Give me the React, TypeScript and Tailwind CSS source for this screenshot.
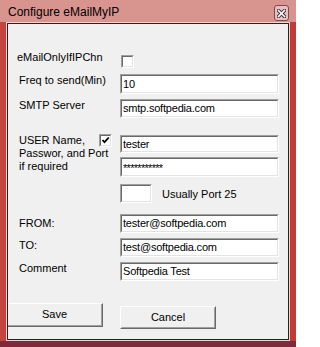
import React from "react";

const font = { fontFamily: '"Liberation Sans", Arial, sans-serif' };

function Field({ w = 159, h, children }: { w?: number; h: number; children?: React.ReactNode }) {
  return (
    <div
      className="shrink-0 border border-t-[#a0a0a0] border-l-[#a0a0a0] border-b-white border-r-white"
      style={{ width: w, height: h }}
    >
      <div className="w-full h-full border border-t-[#696969] border-l-[#696969] border-b-[#e3e3e3] border-r-[#e3e3e3] bg-white flex items-center pl-[1px] text-[11px] leading-[13px] tracking-[-0.2px] text-black whitespace-nowrap overflow-hidden">
        {children}
      </div>
    </div>
  );
}

function Check({ checked }: { checked?: boolean }) {
  return (
    <div className="w-[13px] h-[13px] shrink-0 border border-t-[#a0a0a0] border-l-[#a0a0a0] border-b-white border-r-white">
      <div className="w-full h-full border border-t-[#696969] border-l-[#696969] border-b-[#e3e3e3] border-r-[#e3e3e3] bg-white flex items-center justify-center">
        {checked && (
          <svg width="9" height="9" viewBox="0 0 9 9">
            <path d="M1.5 4 L3.5 6.2 L7.8 1.5" fill="none" stroke="#000" strokeWidth="1.8" />
          </svg>
        )}
      </div>
    </div>
  );
}

function Label({ ml = 11, w = 101, mt = 0, children }: { ml?: number; w?: number; mt?: number; children: React.ReactNode }) {
  return (
    <div
      className="shrink-0 text-[11px] leading-[13px] text-black whitespace-nowrap"
      style={{ marginLeft: ml, width: w, marginTop: mt }}
    >
      {children}
    </div>
  );
}

export default function App() {
  return (
    <div className="w-[296px] h-[347px] flex flex-col overflow-hidden bg-[#c44a44]" style={font}>
      {/* title bar */}
      <div className="h-[22px] shrink-0 flex items-start relative bg-[#d8948f]">
        <div className="pl-[8px] pt-[5px] text-[12px] leading-[14px] text-black">Configure eMailMyIP</div>
        <div className="absolute left-[274px] top-[5px] w-[15px] h-[16px] rounded-[3px] border border-[#7d4848] bg-[#e6c0c4] flex items-center justify-center">
          <svg width="9" height="9" viewBox="0 0 9 9">
            <path d="M1.5 1.5 L7.5 7.5 M7.5 1.5 L1.5 7.5" stroke="#3a2a2a" strokeWidth="3.4" strokeLinecap="square" />
            <path d="M1.5 1.5 L7.5 7.5 M7.5 1.5 L1.5 7.5" stroke="#ffffff" strokeWidth="1.6" strokeLinecap="square" />
          </svg>
        </div>
      </div>
      {/* middle */}
      <div className="flex flex-row h-[319px] shrink-0">
        <div className="w-[6px] shrink-0 bg-[#c4443e]" />
        <div className="w-[284px] h-[319px] shrink-0 border border-[#f0d4d4]">
          <div className="w-[282px] h-[317px] border border-[#3c1a1a] bg-[#f0f0f0] flex flex-col">
            {/* row 1 */}
            <div className="flex mt-[27px] h-[17px]">
              <Label ml={9} w={104}>eMailOnlyIfIPChn</Label>
              <div className="mt-[4px]">
                <Check />
              </div>
            </div>
            {/* row 2 */}
            <div className="flex mt-[6px]">
              <Label>Freq to send(Min)</Label>
              <Field h={20}>10</Field>
            </div>
            {/* row 3 */}
            <div className="flex mt-[5px]">
              <Label>SMTP Server</Label>
              <Field h={19}>smtp.softpedia.com</Field>
            </div>
            {/* row 4 */}
            <div className="flex mt-[16px]">
              <div className="shrink-0 ml-[11px] w-[101px] flex flex-col text-[11px] leading-[13px] text-black whitespace-nowrap">
                <div className="flex">
                  <span className="w-[80px]">USER Name,</span>
                  <Check checked />
                </div>
                <div>Passwor, and Port</div>
                <div>if required</div>
              </div>
              <div className="flex flex-col">
                <div className="mt-[1px]">
                  <Field h={18}>tester</Field>
                </div>
                <div className="mt-[4px]">
                  <Field h={20}>
                    <span className="tracking-[-0.7px] pt-[3px]">***********</span>
                  </Field>
                </div>
                <div className="flex mt-[7px]">
                  <Field w={32} h={19} />
                  <div className="ml-[10px] mt-[4px] text-[11px] leading-[13px] text-black whitespace-nowrap">Usually Port 25</div>
                </div>
              </div>
            </div>
            {/* FROM */}
            <div className="flex mt-[11px]">
              <Label mt={3}>FROM:</Label>
              <Field h={19}>tester@softpedia.com</Field>
            </div>
            {/* TO */}
            <div className="flex mt-[5px]">
              <Label mt={1}>TO:</Label>
              <Field h={19}>test@softpedia.com</Field>
            </div>
            {/* Comment */}
            <div className="flex mt-[5px]">
              <Label>Comment</Label>
              <Field h={19}>Softpedia Test</Field>
            </div>
            {/* buttons */}
            <div className="flex items-start mt-[22px]">
              <div className="w-[95px] h-[24px] border-t border-t-white border-r border-b border-r-[#696969] border-b-[#696969]">
                <div className="w-full h-full border-r border-b border-r-[#a0a0a0] border-b-[#a0a0a0] bg-[#f0f0f0] flex items-center justify-center text-[11px] leading-[13px] text-black">
                  Save
                </div>
              </div>
              <div className="ml-[17px] mt-[3px] w-[96px] h-[23px] border border-t-white border-l-white border-r-[#696969] border-b-[#696969]">
                <div className="w-full h-full border border-t-[#f0f0f0] border-l-[#f0f0f0] border-r-[#a0a0a0] border-b-[#a0a0a0] bg-[#f0f0f0] flex items-center justify-center text-[11px] leading-[13px] text-black">
                  Cancel
                </div>
              </div>
            </div>
          </div>
        </div>
        <div className="w-[6px] shrink-0 bg-[#c03a36]" />
      </div>
      {/* bottom frame */}
      <div className="h-[6px] shrink-0 bg-[#7e2a3c]" />
    </div>
  );
}
